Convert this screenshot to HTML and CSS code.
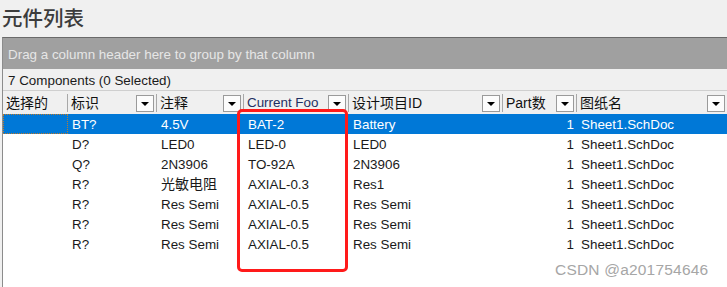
FILE: index.html
```html
<!DOCTYPE html>
<html>
<head>
<meta charset="utf-8">
<link rel="stylesheet" href="styles.css">
</head>
<body>
<div class="title">元件列表</div>
<div class="panel">
  <div class="groupbar">Drag a column header here to group by that column</div>
  <div class="count">7 Components (0 Selected)</div>
  <div class="grid header">
    <div class="hcell"><span class="htext">选择的</span></div>
    <div class="hcell"><span class="htext">标识</span><span class="dd"></span></div>
    <div class="hcell"><span class="htext">注释</span><span class="dd"></span></div>
    <div class="hcell"><span class="htext blue">Current Foo</span><span class="dd"></span></div>
    <div class="hcell"><span class="htext">设计项目ID</span><span class="dd"></span></div>
    <div class="hcell"><span class="htext">Part数</span><span class="dd"></span></div>
    <div class="hcell last"><span class="htext">图纸名</span><span class="dd"></span></div>
  </div>
  <div class="rows">
    <div class="grid row selected">
      <div class="cell focus"></div><div class="cell">BT?</div><div class="cell">4.5V</div><div class="cell">BAT-2</div><div class="cell">Battery</div><div class="cell num">1</div><div class="cell">Sheet1.SchDoc</div>
    </div>
    <div class="grid row">
      <div class="cell"></div><div class="cell">D?</div><div class="cell">LED0</div><div class="cell">LED-0</div><div class="cell">LED0</div><div class="cell num">1</div><div class="cell">Sheet1.SchDoc</div>
    </div>
    <div class="grid row">
      <div class="cell"></div><div class="cell">Q?</div><div class="cell">2N3906</div><div class="cell">TO-92A</div><div class="cell">2N3906</div><div class="cell num">1</div><div class="cell">Sheet1.SchDoc</div>
    </div>
    <div class="grid row">
      <div class="cell"></div><div class="cell">R?</div><div class="cell cjk">光敏电阻</div><div class="cell">AXIAL-0.3</div><div class="cell">Res1</div><div class="cell num">1</div><div class="cell">Sheet1.SchDoc</div>
    </div>
    <div class="grid row">
      <div class="cell"></div><div class="cell">R?</div><div class="cell">Res Semi</div><div class="cell">AXIAL-0.5</div><div class="cell">Res Semi</div><div class="cell num">1</div><div class="cell">Sheet1.SchDoc</div>
    </div>
    <div class="grid row">
      <div class="cell"></div><div class="cell">R?</div><div class="cell">Res Semi</div><div class="cell">AXIAL-0.5</div><div class="cell">Res Semi</div><div class="cell num">1</div><div class="cell">Sheet1.SchDoc</div>
    </div>
    <div class="grid row">
      <div class="cell"></div><div class="cell">R?</div><div class="cell">Res Semi</div><div class="cell">AXIAL-0.5</div><div class="cell">Res Semi</div><div class="cell num">1</div><div class="cell">Sheet1.SchDoc</div>
    </div>
  </div>
</div>
<div class="highlight"></div>
<div class="watermark">CSDN @a201754646</div>
</body>
</html>
```
FILE: styles.css
```css
html, body {
  margin: 0;
  padding: 0;
  height: 100%;
  overflow: hidden;
}
body {
  background: #f0f0f0;
  font-family: "Liberation Sans", "Noto Sans CJK SC", sans-serif;
  font-size: 13.4px;
  color: #1a1a1a;
  position: relative;
}
.title {
  height: 37px;
  box-sizing: border-box;
  padding: 3px 0 0 2px;
  font-family: "Noto Sans CJK SC", sans-serif;
  font-size: 20.5px;
  font-weight: 500;
  line-height: 28px;
  color: #3c3c3c;
}
.panel {
  margin-left: 2px;
  border-left: 1px solid #8c8c8c;
  border-top: 1px solid #6a6a6a;
  height: 250px;
  display: flex;
  flex-direction: column;
}
.groupbar {
  height: 31px;
  background: #a0a0a0;
  color: #e6e6e6;
  padding-left: 5px;
  line-height: 33px;
  flex: none;
}
.count {
  height: 21px;
  line-height: 23px;
  padding-left: 5px;
  border-bottom: 1px solid #cfcfcf;
  background: #f0f0f0;
  flex: none;
}
.grid {
  display: grid;
  grid-template-columns: 65px 89px 87px 105px 154px 74px 1fr;
}
.header {
  height: 23px;
  flex: none;
  background: #f0f0f0;
}
.hcell {
  display: flex;
  align-items: center;
  justify-content: space-between;
  border-right: 1px solid #a8a8a8;
  margin: 3px 0 2px;
  padding: 0 2px 0 3px;
}
.hcell .htext {
  font-size: 14px;
  line-height: 18px;
  white-space: nowrap;
  color: #111;
}
.hcell .htext.blue {
  font-size: 13.4px;
  color: #1f2f62;
}
.hcell.last {
  border-right: none;
}
.dd {
  width: 16px;
  height: 15px;
  border: 1px solid #9a9a9a;
  background: #fcfcfc;
  position: relative;
  flex: none;
}
.dd::after {
  content: "";
  position: absolute;
  left: 4px;
  top: 6px;
  border-left: 4px solid transparent;
  border-right: 4px solid transparent;
  border-top: 4px solid #000;
}
.rows {
  flex: 1;
  background: #fff;
}
.row {
  height: 20px;
  line-height: 21px;
}
.cell {
  padding-left: 4px;
  white-space: nowrap;
  overflow: hidden;
}
.cell.num {
  text-align: right;
  padding-right: 3px;
  padding-left: 0;
}
.cell.cjk {
  font-size: 14px;
}
.row.selected {
  background: #0078d7;
  color: #fff;
}
.focus {
  border: 1px dotted #c07a2a;
  box-sizing: border-box;
}
.highlight {
  position: absolute;
  left: 237px;
  top: 109px;
  width: 105px;
  height: 157px;
  border: 3px solid #ff1a1a;
  border-radius: 5px;
}
.watermark {
  position: absolute;
  left: 555px;
  top: 261px;
  font-family: "Liberation Sans", sans-serif;
  font-size: 15.5px;
  color: #a6a6a6;
  letter-spacing: 0.2px;
}
```
